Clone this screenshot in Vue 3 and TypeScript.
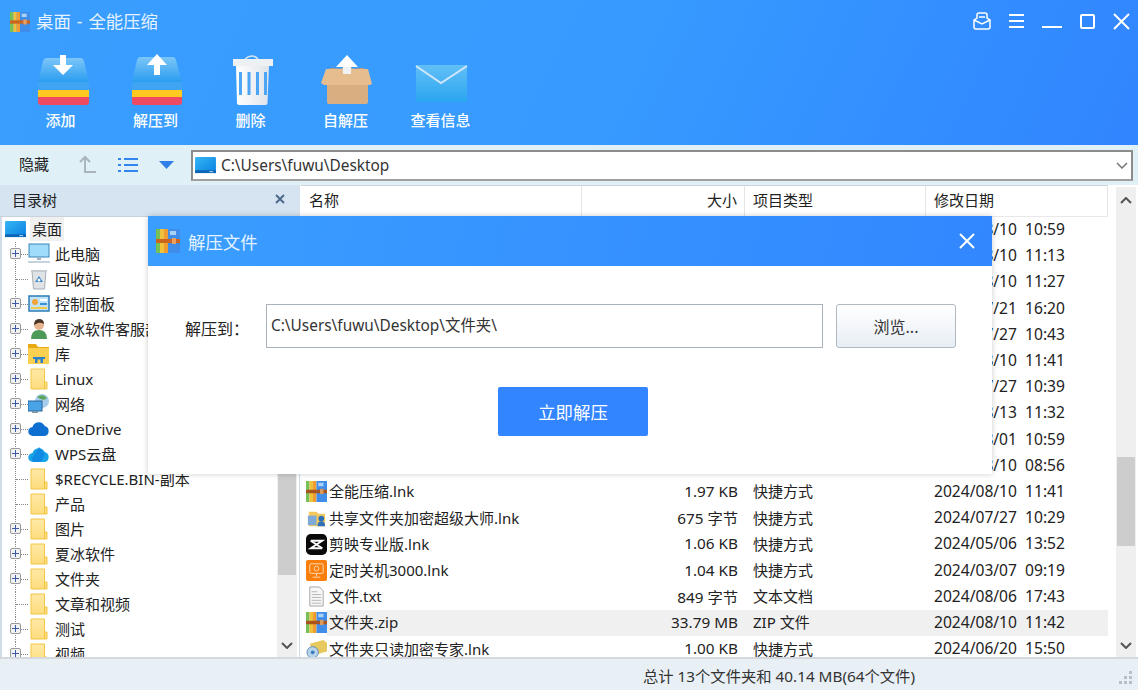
<script setup lang="ts">
type TreeRow = { name: string; icon: string; plus: boolean }
type FileRow = { name: string; icon: string; size: string; kind: string; date: string; time: string; active?: boolean }

const tools = [
  { label: '添加', icon: 't-add' },
  { label: '解压到', icon: 't-extract' },
  { label: '删除', icon: 't-trash' },
  { label: '自解压', icon: 't-box' },
  { label: '查看信息', icon: 't-mail' },
]

const tree: TreeRow[] = [
  { name: '此电脑', icon: 'i-pc', plus: true },
  { name: '回收站', icon: 'i-bin', plus: false },
  { name: '控制面板', icon: 'i-panel', plus: true },
  { name: '夏冰软件客服部', icon: 'i-user', plus: true },
  { name: '库', icon: 'i-lib', plus: true },
  { name: 'Linux', icon: 'i-folder', plus: true },
  { name: '网络', icon: 'i-net', plus: true },
  { name: 'OneDrive', icon: 'i-cloud', plus: true },
  { name: 'WPS云盘', icon: 'i-wps', plus: true },
  { name: '$RECYCLE.BIN-副本', icon: 'i-folder', plus: false },
  { name: '产品', icon: 'i-folder', plus: false },
  { name: '图片', icon: 'i-folder', plus: true },
  { name: '夏冰软件', icon: 'i-folder', plus: true },
  { name: '文件夹', icon: 'i-folder', plus: true },
  { name: '文章和视频', icon: 'i-folder', plus: false },
  { name: '测试', icon: 'i-folder', plus: true },
  { name: '视频', icon: 'i-folder', plus: true },
]

// 前几行被对话框挡住，只露出日期
const hidden: [string, string][] = [
  ['2024/08/10', '10:59'], ['2024/08/10', '11:13'], ['2024/08/10', '11:27'],
  ['2024/07/21', '16:20'], ['2024/07/27', '10:43'], ['2024/08/10', '11:41'],
  ['2024/07/27', '10:39'], ['2024/08/13', '11:32'], ['2024/08/01', '10:59'],
  ['2024/08/10', '08:56'],
]

const files: FileRow[] = [
  ...hidden.map(([date, time], i): FileRow => ({
    name: tree[i + 5]?.name ?? '文件夹', icon: i === 9 ? 'i-blue' : 'i-folder', size: '', kind: '文件夹', date, time,
  })),
  { name: '全能压缩.lnk', icon: 'i-zip', size: '1.97 KB', kind: '快捷方式', date: '2024/08/10', time: '11:41' },
  { name: '共享文件夹加密超级大师.lnk', icon: 'i-share', size: '675 字节', kind: '快捷方式', date: '2024/07/27', time: '10:29' },
  { name: '剪映专业版.lnk', icon: 'i-cut', size: '1.06 KB', kind: '快捷方式', date: '2024/05/06', time: '13:52' },
  { name: '定时关机3000.lnk', icon: 'i-timer', size: '1.04 KB', kind: '快捷方式', date: '2024/03/07', time: '09:19' },
  { name: '文件.txt', icon: 'i-txt', size: '849 字节', kind: '文本文档', date: '2024/08/06', time: '17:43' },
  { name: '文件夹.zip', icon: 'i-zip', size: '33.79 MB', kind: 'ZIP 文件', date: '2024/08/10', time: '11:42', active: true },
  { name: '文件夹只读加密专家.lnk', icon: 'i-lock', size: '1.00 KB', kind: '快捷方式', date: '2024/06/20', time: '15:50' },
]
</script>

<template>
  <div class="win">
    <svg class="defs" width="0" height="0">
      <defs>
        <linearGradient id="g-box" x1="0" y1="0" x2="0" y2="1"><stop offset="0" stop-color="#7cc6f8" /><stop offset="1" stop-color="#2b9df0" /></linearGradient>
        <linearGradient id="g-can" x1="0" y1="0" x2="1" y2="0"><stop offset="0" stop-color="#ffffff" /><stop offset="1" stop-color="#dfe4ea" /></linearGradient>
        <linearGradient id="g-mail" x1="0" y1="0" x2="0" y2="1"><stop offset="0" stop-color="#62bff7" /><stop offset="1" stop-color="#2aa5ef" /></linearGradient>
        <linearGradient id="g-screen" x1="0" y1="0" x2="1" y2="1"><stop offset="0" stop-color="#35b6f5" /><stop offset="1" stop-color="#0a7fe0" /></linearGradient>
        <linearGradient id="g-folder" x1="0" y1="0" x2="0" y2="1"><stop offset="0" stop-color="#ffe9a6" /><stop offset="1" stop-color="#fddc7d" /></linearGradient>
        <symbol id="t-add" viewBox="0 0 56 56">
          <path d="M13 6h35q2 0 3 3l5 21H5l5-21q1-3 3-3z" fill="url(#g-box)" /><path d="M5 30h51v8H5z" fill="#3fa5f2" /><path d="M5 38h51v8H5z" fill="#ffc91f" /><path d="M5 45h51v5q0 3-3 3H8q-3 0-3-3z" fill="#ee4b62" />
          <path d="M27 3h6v10h7l-10 10-10-10h7z" fill="#fff" />
        </symbol>
        <symbol id="t-extract" viewBox="0 0 56 56">
          <path d="M12 5h33q2 0 3 3l6 22H4l5-22q1-3 3-3z" fill="url(#g-box)" /><path d="M4 30h50v8H4z" fill="#3fa5f2" /><path d="M4 38h50v8H4z" fill="#ffc91f" /><path d="M4 45h50v5q0 3-3 3H7q-3 0-3-3z" fill="#ee4b62" />
          <path d="M26 23V13h-7L29 2l10 11h-7v10z" fill="#fff" />
        </symbol>
        <symbol id="t-trash" viewBox="0 0 56 56">
          <path d="M22 7q7-6 13 0" fill="none" stroke="#d9e6f4" stroke-width="1.500" />
          <path d="M10 7h40v7H10z" fill="#eef1f4" /><path d="M13 14h33l-1.500 37q0 2-3 2H17q-3 0-3-2z" fill="url(#g-can)" />
          <g fill="#4da5f5"><rect x="16" y="20" width="3" height="23" /><rect x="24.500" y="20" width="3" height="23" /><rect x="33" y="20" width="3" height="23" /><rect x="41" y="20" width="3" height="23" /></g>
        </symbol>
        <symbol id="t-box" viewBox="0 0 56 56">
          <path d="M8 30l4-14 17 1 17-1 4 14z" fill="#c99c6e" /><path d="M9 29h41v21q0 2-2 2H11q-2 0-2-2z" fill="#d9ae80" />
          <path d="M8 17h15l3-2h6l3 2h15l4 15-2 1H6l-3-2z" fill="#e6bd8f" /><path d="M25 14h8v8h-8z" fill="#f0f2f4" />
          <path d="M29 3l11 12H18z" fill="#fff" />
        </symbol>
        <symbol id="t-mail" viewBox="0 0 56 56">
          <rect x="3" y="13" width="51" height="37" rx="1" fill="url(#g-mail)" /><path d="M3 14l25 17 26-17" fill="none" stroke="#cfe6fb" stroke-width="2" />
        </symbol>
        <symbol id="i-logo" viewBox="0 0 24 24">
          <rect x="0" y="0" width="4" height="24" fill="#76c057" /><rect x="4" y="0" width="4" height="24" fill="#f0c23b" /><rect x="8" y="0" width="4" height="24" fill="#ef9c33" /><rect x="12" y="0" width="12" height="24" fill="#3f8de8" />
          <rect x="14" y="2" width="6" height="4" fill="#a9d2f6" /><rect x="0" y="10" width="24" height="4" fill="#c9651f" /><rect x="16" y="9" width="4" height="6" fill="#e9a060" />
        </symbol>
        <symbol id="i-monitor" viewBox="0 0 22 20">
          <rect x="0" y="1" width="22" height="17" rx="1" fill="url(#g-screen)" /><rect x="0" y="15" width="22" height="3" fill="#0b66b8" /><rect x="15" y="16" width="4" height="1" fill="#bde3fb" />
        </symbol>
        <symbol id="i-folder" viewBox="0 0 22 22">
          <path d="M3 1h13.500v20H3z" fill="url(#g-folder)" stroke="#f2c544" /><path d="M16.500 14h2.500v7h-2.500z" fill="#fddc7d" stroke="#f2c544" />
        </symbol>
        <symbol id="i-pc" viewBox="0 0 22 22">
          <rect x="1" y="1" width="20" height="13" fill="#9fdcfb" stroke="#3a84b8" /><path d="M9 14h4v3H9z" fill="#9db6c8" /><path d="M0 18h22v2H0z" fill="#c7d3dc" />
        </symbol>
        <symbol id="i-bin" viewBox="0 0 22 22">
          <path d="M4 3h14l-1.500 18h-11z" fill="#dfe3e6" stroke="#a9afb5" /><path d="M3 2h16v2H3z" fill="#c6cbd0" /><path d="M11 8l4 6h-8z" fill="#3d88cb" /><circle cx="11" cy="12" r="1.500" fill="#fff" />
        </symbol>
        <symbol id="i-panel" viewBox="0 0 22 22">
          <rect x="1" y="3" width="20" height="15" fill="#bfe3f8" stroke="#2d7cb5" stroke-width="1.500" /><circle cx="7" cy="9" r="3" fill="#f2a53a" /><rect x="12" y="6" width="7" height="2" fill="#fff" /><rect x="12" y="10" width="7" height="2" fill="#3c8fd0" /><rect x="3" y="14" width="16" height="2" fill="#f2c94c" />
        </symbol>
        <symbol id="i-user" viewBox="0 0 22 22">
          <path d="M3 21q0-9 8-9t8 9z" fill="#4d9a58" /><circle cx="11" cy="7" r="5" fill="#e8b48e" /><path d="M6 7q0-6 5-6t5 5q-4-2-6-1t-4 2z" fill="#4a3628" />
        </symbol>
        <symbol id="i-lib" viewBox="0 0 22 22">
          <path d="M0 1h8l2 3h11v3H0z" fill="#e9a913" /><path d="M0 5h21v16H0z" fill="#fbcf4f" /><path d="M7 20v-6h8v6h-2.500v-3.500h-3V20z" fill="#2d80c9" /><path d="M5 14h12v2H5z" fill="#2d80c9" />
        </symbol>
        <symbol id="i-net" viewBox="0 0 22 22">
          <circle cx="14" cy="8" r="7" fill="#a7cdea" /><path d="M9 4q6-4 10 1-3 4-10-1z" fill="#5ba55b" /><rect x="0" y="8" width="14" height="10" fill="#4aa3e6" stroke="#24679d" /><rect x="4" y="18" width="6" height="2" fill="#7f97a8" />
        </symbol>
        <symbol id="i-cloud" viewBox="0 0 22 22">
          <path d="M5 18a4.500 4.500 0 0 1-.5-9 6.500 6.500 0 0 1 12.200-1A5.200 5.200 0 0 1 17 18z" fill="#0f6fd0" />
        </symbol>
        <symbol id="i-wps" viewBox="0 0 22 22">
          <path d="M5 19a4.500 4.500 0 0 1-.5-9 6.500 6.500 0 0 1 12.200-1A5.200 5.200 0 0 1 17 19z" fill="#19a4e8" /><path d="M11 4l6 7-4 8H5l-1-4z" fill="#0d7fe0" opacity=".7" />
        </symbol>
        <symbol id="i-blue" viewBox="0 0 22 22"><rect x="2" y="2" width="18" height="18" rx="3" fill="#3e6fe8" /></symbol>
        <symbol id="i-zip" viewBox="0 0 24 24">
          <rect x="0" y="0" width="4" height="24" fill="#76c057" /><rect x="4" y="0" width="4" height="24" fill="#f0c23b" /><rect x="8" y="0" width="4" height="24" fill="#ef9c33" /><rect x="12" y="0" width="12" height="24" fill="#3f8de8" />
          <rect x="14" y="2" width="6" height="4" fill="#a9d2f6" /><rect x="0" y="10" width="24" height="4" fill="#a8551d" /><rect x="16" y="9" width="4" height="6" fill="#d99a5c" />
        </symbol>
        <symbol id="i-share" viewBox="0 0 22 22">
          <path d="M3 4h8l2 2h7v13H3z" fill="#f2c95a" /><rect x="2" y="8" width="9" height="10" fill="#7fa9d6" /><circle cx="16" cy="11" r="3" fill="#2d6fb8" /><path d="M12 19q0-5 4-5t4 5z" fill="#2d6fb8" />
        </symbol>
        <symbol id="i-cut" viewBox="0 0 22 22">
          <rect x="0" y="0" width="22" height="22" rx="5" fill="#0a0a0a" /><path d="M5 7h12L5 15h12" fill="none" stroke="#fff" stroke-width="2" /><path d="M5 7l12 8" stroke="#fff" stroke-width="2" />
        </symbol>
        <symbol id="i-timer" viewBox="0 0 22 22">
          <rect x="0" y="0" width="22" height="22" rx="2" fill="#f97e0c" /><rect x="4" y="4" width="14" height="10" rx="1" fill="none" stroke="#ffd9b0" /><circle cx="11" cy="9" r="2.500" fill="none" stroke="#ffd9b0" /><path d="M11 14v3M7 18h8" stroke="#ffd9b0" />
        </symbol>
        <symbol id="i-txt" viewBox="0 0 22 22">
          <path d="M4 1h10l4 4v16H4z" fill="#f7f7f7" stroke="#a5a5a5" /><path d="M6 6h6M6 9h10M6 12h10M6 15h10M6 18h10" stroke="#b5b5b5" />
        </symbol>
        <symbol id="i-lock" viewBox="0 0 22 22">
          <path d="M4 5l14-4 4 3v9L8 17z" fill="#e7c95f" /><circle cx="7" cy="14" r="6" fill="#b8d3ea" stroke="#5d8db8" /><circle cx="7" cy="14" r="2" fill="#3c7fc0" />
        </symbol>
      </defs>
    </svg>

    <header class="head">
      <div class="title-bar">
        <svg class="logo"><use href="#i-logo" /></svg>
        <span class="title">桌面 - 全能压缩</span>
        <div class="win-btns">
          <svg width="18" height="18" viewBox="0 0 18 18" fill="none" stroke="#fff" stroke-width="1.500"><path d="M1 8l3-2v-3q0-2 2-2h6q2 0 2 2v3l3 2v7q0 2-2 2H3q-2 0-2-2z" /><path d="M1 8l8 4 8-4M6 5h6" /></svg>
          <svg width="15" height="16" viewBox="0 0 15 16" stroke="#fff" stroke-width="2"><path d="M0 2h15M0 8h15M0 14h15" /></svg>
          <svg width="20" height="16" viewBox="0 0 20 16" stroke="#fff" stroke-width="2"><path d="M0 14h20" /></svg>
          <svg width="15" height="15" viewBox="0 0 15 15" fill="none" stroke="#fff" stroke-width="2"><rect x="1" y="1" width="13" height="13" rx="1" /></svg>
          <svg width="17" height="17" viewBox="0 0 17 17" stroke="#fff" stroke-width="2"><path d="M1 1l15 15M16 1L1 16" /></svg>
        </div>
      </div>
      <div class="tools">
        <div v-for="t in tools" :key="t.label" class="tool">
          <svg width="56" height="56"><use :href="'#' + t.icon" /></svg>
          <span>{{ t.label }}</span>
        </div>
      </div>
    </header>

    <div class="addr-row">
      <span class="hide-btn">隐藏</span>
      <svg class="up" width="18" height="20" viewBox="0 0 18 20" fill="none" stroke="#a9b4bb" stroke-width="2"><path d="M2 7l5-5 5 5M7 2v15h11" /></svg>
      <svg class="list" width="20" height="16" viewBox="0 0 20 16" stroke="#3385f0" stroke-width="2"><path d="M0 2h3M6 2h14M0 8h3M6 8h14M0 14h3M6 14h14" /></svg>
      <svg class="drop" width="15" height="8" viewBox="0 0 15 8"><path d="M0 0h15L7.500 8z" fill="#2f7fe8" /></svg>
      <div class="addr">
        <svg width="21" height="19"><use href="#i-monitor" /></svg>
        <span>C:\Users\fuwu\Desktop</span>
        <svg class="chev" width="12" height="7" viewBox="0 0 12 7" fill="none" stroke="#777" stroke-width="1.500"><path d="M1 1l5 5 5-5" /></svg>
      </div>
    </div>

    <main class="panes">
      <section class="left">
        <div class="left-head">
          <span>目录树</span>
          <svg width="10" height="10" viewBox="0 0 10 10" stroke="#4d6a8c" stroke-width="2"><path d="M1 1l8 8M9 1L1 9" /></svg>
        </div>
        <div class="left-body">
          <div class="tree">
            <div class="root">
              <svg width="21" height="19"><use href="#i-monitor" /></svg>
              <span>桌面</span>
            </div>
            <div v-for="r in tree" :key="r.name" class="node">
              <i class="dots"></i>
              <i v-if="r.plus" class="plus"></i>
              <svg width="22" height="22"><use :href="'#' + r.icon" /></svg>
              <span>{{ r.name }}</span>
            </div>
          </div>
          <div class="bar">
            <svg class="arr" width="12" height="7" viewBox="0 0 12 7" fill="none" stroke="#555" stroke-width="2"><path d="M1 1l5 5 5-5" /></svg>
            <div class="thumb left-thumb"></div>
          </div>
        </div>
      </section>

      <section class="right">
        <div class="cols">
          <span class="c-name">名称</span>
          <span class="c-size">大小</span>
          <span class="c-kind">项目类型</span>
          <span class="c-date">修改日期</span>
        </div>
        <div class="rows">
          <div v-for="(f, i) in files" :key="i" class="row">
            <svg width="21" height="21"><use :href="'#' + f.icon" /></svg>
            <div class="cells" :class="{ on: f.active }">
              <span class="n">{{ f.name }}</span>
              <span class="s">{{ f.size }}</span>
              <span class="k">{{ f.kind }}</span>
              <span class="d">{{ f.date }}&nbsp;&nbsp;{{ f.time }}</span>
            </div>
          </div>
        </div>
        <div class="bar right-bar">
          <svg class="arr up-arr" width="12" height="7" viewBox="0 0 12 7" fill="none" stroke="#555" stroke-width="2"><path d="M1 6l5-5 5 5" /></svg>
          <svg class="arr" width="12" height="7" viewBox="0 0 12 7" fill="none" stroke="#555" stroke-width="2"><path d="M1 1l5 5 5-5" /></svg>
          <div class="thumb right-thumb"></div>
        </div>
      </section>
    </main>

    <footer class="status">
      <span>总计 13个文件夹和 40.14 MB(64个文件)</span>
      <svg class="grip" width="14" height="14" viewBox="0 0 14 14" fill="#b9c0c5"><rect x="10" y="0" width="3" height="3" /><rect x="5" y="5" width="3" height="3" /><rect x="10" y="5" width="3" height="3" /><rect x="0" y="10" width="3" height="3" /><rect x="5" y="10" width="3" height="3" /><rect x="10" y="10" width="3" height="3" /></svg>
    </footer>

    <div class="dialog">
      <div class="dlg-head">
        <svg class="dlg-logo"><use href="#i-logo" /></svg>
        <span>解压文件</span>
        <svg class="dlg-x" width="16" height="16" viewBox="0 0 16 16" stroke="#fff" stroke-width="2"><path d="M1 1l14 14M15 1L1 15" /></svg>
      </div>
      <div class="dlg-body">
        <div class="dlg-line">
          <label>解压到：</label>
          <input value="C:\Users\fuwu\Desktop\文件夹\" />
          <button type="button" class="browse">浏览...</button>
        </div>
        <button type="button" class="go">立即解压</button>
      </div>
    </div>
  </div>
</template>

<style>
html, body { margin: 0; overflow: hidden; }
</style>

<style scoped>
.win {
  position: relative;
  width: 1138px;
  height: 690px;
  display: flex;
  flex-direction: column;
  overflow: hidden;
  background: #fff;
  color: #222;
  font-family: "Noto Sans", "Noto Sans CJK SC", sans-serif;
  font-size: 15px;
}
.defs { position: absolute; }
.head {
  height: 145px;
  background: linear-gradient(115deg, #3a9eff 0%, #369aff 55%, #3185ff 100%);
  color: #fff;
}
.title-bar {
  height: 44px;
  display: flex;
  align-items: center;
  padding: 0 8px 0 10px;
}
.logo { width: 20px; height: 20px; }
.title { margin-left: 6px; font-size: 17.400px; color: #e6f3ff; margin-top: -3px; word-spacing: 1.500px; }
.win-btns {
  margin-left: auto;
  display: flex;
  align-items: center;
  gap: 18px;
  margin-top: -2px;
}
.tools { display: flex; padding-left: 13px; margin-top: 8px; }
.tool {
  width: 95px;
  display: flex;
  flex-direction: column;
  align-items: center;
  font-size: 15px;
  font-weight: 500;
}
.tool span { margin-top: 2px; line-height: 20px; }
.addr-row {
  height: 40px;
  box-sizing: border-box;
  display: flex;
  align-items: center;
  background: #e0f0f7;
  padding: 0 5px 0 19px;
}
.hide-btn { width: 30px; font-size: 15px; margin-top: -3px; }
.up { margin-left: 29px; }
.list { margin-left: 22px; }
.drop { margin-left: 21px; }
.addr {
  flex: 1;
  margin-left: 17px;
  height: 31px;
  box-sizing: border-box;
  border: 2px solid #8c8c8c;
  border-bottom-color: #a0a0a0;
  background: #fff;
  display: flex;
  align-items: center;
  padding-left: 2px;
  font-size: 15.400px;
  color: #333;
}
.addr span { margin-left: 5px; }
.chev { margin-left: auto; margin-right: 3px; }
.panes { flex: 1; min-height: 0; display: flex; }
.left {
  width: 300px;
  flex: none;
  box-sizing: border-box;
  border-left: 2px solid #d0dde8;
  border-right: 1px solid #d0dde8;
  display: flex;
  flex-direction: column;
}
.left-head {
  height: 32px;
  flex: none;
  box-sizing: border-box;
  background: #d6e4f1;
  display: flex;
  align-items: center;
  justify-content: space-between;
  margin: 0 -1px 0 -2px;
  padding: 0 15px 3px 12px;
  border-bottom: 1px solid #c8d2da;
}
.left-body { flex: 1; min-height: 0; display: flex; overflow: hidden; }
.tree { flex: 1; min-width: 0; overflow: hidden; margin-top: -1px; }
.root, .node {
  height: 25px;
  display: flex;
  align-items: center;
  position: relative;
  white-space: nowrap;
}
.root { padding-left: 3px; height: 26px; }
.root svg { margin-top: 1px; }
.root span {
  margin-left: 4px;
  background: #f0f0f0;
  padding: 0 2px;
  line-height: 24px;
}
.node { padding-left: 26px; }
.node svg { margin-top: -1px; }
.node span { margin-left: 5px; margin-top: -2px; }
.dots {
  position: absolute;
  left: 13px;
  top: 0;
  bottom: 0;
  border-left: 1px dotted #888;
}
.dots::after {
  content: "";
  position: absolute;
  left: 0;
  top: 12px;
  width: 12px;
  border-top: 1px dotted #888;
}
.plus {
  position: absolute;
  left: 8px;
  top: 6px;
  width: 11px;
  height: 11px;
  box-sizing: border-box;
  border: 1px solid #999;
  border-radius: 2px;
  background:
    linear-gradient(#3c5aa8, #3c5aa8) center / 7px 1px no-repeat,
    linear-gradient(#3c5aa8, #3c5aa8) center / 1px 7px no-repeat,
    #f2f2f2;
}
.bar {
  position: relative;
  width: 20px;
  flex: none;
  background: #efefef;
  margin-right: 2px;
}
.arr { position: absolute; left: 4px; bottom: 8px; }
.up-arr { top: 10px; bottom: auto; }
.thumb { position: absolute; left: 1px; right: 1px; background: #cdcdcd; }
.left-thumb { top: 0; height: 358px; }
.right {
  flex: 1;
  min-width: 0;
  position: relative;
  display: flex;
  flex-direction: column;
  margin-left: 1px;
  padding-right: 30px;
}
.cols {
  height: 32px;
  flex: none;
  display: flex;
  align-items: center;
  box-sizing: border-box;
  border-top: 1px solid #cfd3dc;
  border-bottom: 1px solid #e8e8e8;
}
.cols span {
  height: 100%;
  box-sizing: border-box;
  display: flex;
  align-items: center;
  border-right: 1px solid #e5e5e5;
  padding-bottom: 3px;
}
.c-name { width: 281px; padding-left: 8px; }
.c-size { width: 163px; justify-content: flex-end; padding-right: 7px; }
.c-kind { width: 181px; padding-left: 8px; }
.c-date { width: 182px; padding-left: 8px; }
.rows { flex: 1; min-height: 0; overflow: hidden; }
.row {
  height: 26.200px;
  display: flex;
  align-items: center;
  padding-left: 5px;
  white-space: nowrap;
  font-size: 15px;
}
.row svg { flex: none; }
.cells { flex: 1; height: 100%; display: flex; align-items: center; padding-left: 2px; }
.cells span { margin-top: -2px; }
.cells.on { background: #f0f0f0; }
.n { width: 253px; }
.s { width: 156px; text-align: right; font-size: 15.300px; }
.k { width: 166px; padding-left: 15px; }
.d { padding-left: 15px; font-size: 15.600px; }
.right-bar { position: absolute; right: 0; top: 2px; bottom: 0; }
.right-thumb { top: 270px; height: 89px; }
.status {
  height: 33px;
  flex: none;
  box-sizing: border-box;
  border-top: 2px solid #d3d9de;
  background: #e9f0f5;
  display: flex;
  align-items: center;
  padding-left: 643px;
  position: relative;
  font-size: 15.300px;
  color: #333;
}
.grip { position: absolute; right: 5px; bottom: 5px; }
.dialog {
  position: absolute;
  left: 148px;
  top: 216px;
  width: 844px;
  height: 258px;
  background: #fff;
  box-shadow: 0 0 6px rgba(0,0,0,.2);
}
.dlg-head {
  height: 50px;
  background: linear-gradient(100deg, #3a9eff, #3287ff);
  display: flex;
  align-items: center;
  padding-left: 8px;
  color: #e6f3ff;
  font-size: 17.400px;
}
.dlg-logo { width: 24px; height: 24px; margin-right: 8px; }
.dlg-x { margin-left: auto; margin-right: 17px; }
.dlg-body { display: flex; flex-direction: column; align-items: center; }
.dlg-line {
  align-self: stretch;
  display: flex;
  align-items: center;
  padding-left: 37px;
  margin-top: 38px;
}
.dlg-line label { width: 81px; font-size: 16px; margin-top: 3px; }
.dlg-line input {
  width: 557px;
  height: 44px;
  box-sizing: border-box;
  border: 1px solid #a9b1bb;
  outline: none;
  padding: 0 4px 4px;
  font: inherit;
  font-size: 15.400px;
  color: #333;
}
.browse {
  margin-left: 13px;
  width: 120px;
  height: 44px;
  border: 1px solid #b0b8c0;
  border-radius: 3px;
  background: linear-gradient(#ffffff, #e8eef5);
  font: inherit;
  font-size: 16px;
  color: #333;
}
.go {
  margin: 39px 0 0 6px;
  width: 150px;
  height: 49px;
  border: 0;
  border-radius: 2px;
  background: #3385ff;
  color: #fff;
  font: inherit;
  font-size: 17.400px;
}
</style>
